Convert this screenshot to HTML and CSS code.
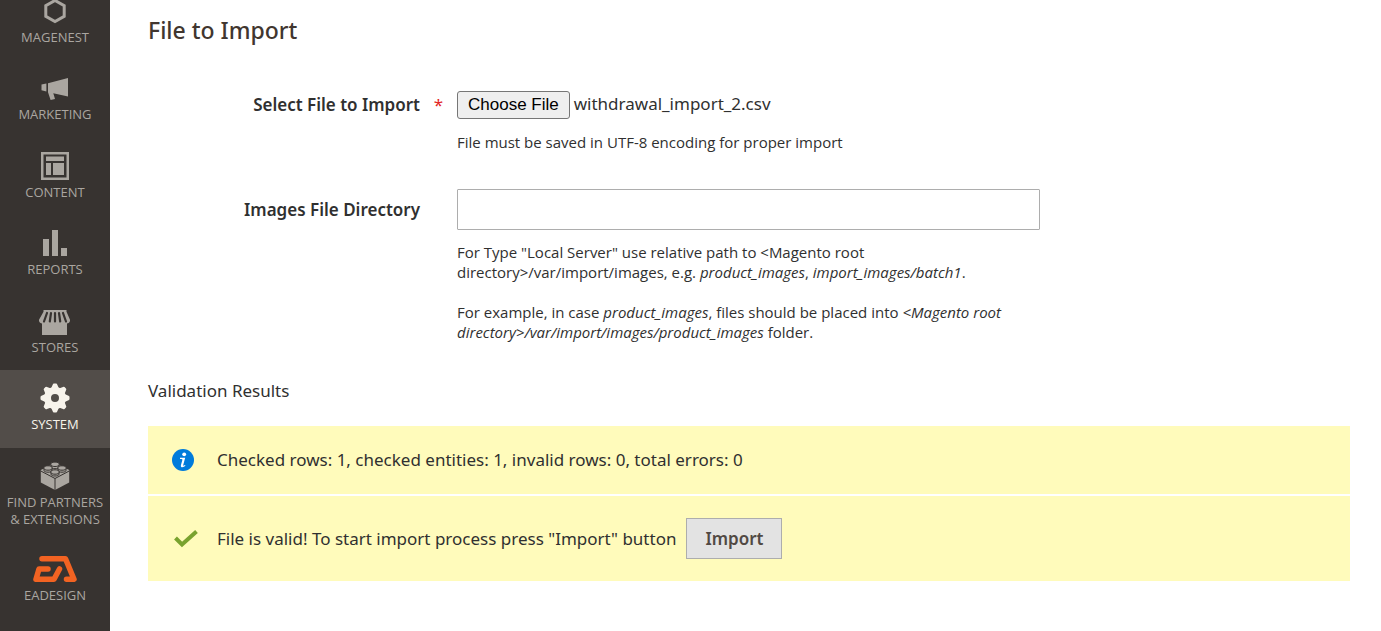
FILE: index.html
```html
<!DOCTYPE html>
<html lang="en">
<head>
    <meta charset="UTF-8">
    <meta name="viewport" content="width=device-width, initial-scale=1.0">
    <title>Import / System - Magento Admin</title>
    <link rel="stylesheet" href="styles.css">
</head>
<body>
    <nav class="menu" aria-label="Main menu">
        <ul class="menu-list">
            <li><a class="menu-item" href="#">
                <span class="menu-icon">
                    <svg width="24" height="28" viewBox="0 0 24 28"><path d="M12 3.5 21.2 8.6v10.8L12 24.5 2.8 19.4V8.6z" fill="none" stroke="currentColor" stroke-width="3"/></svg>
                </span>
                <span>MAGENEST</span>
            </a></li>
            <li><a class="menu-item" href="#">
                <span class="menu-icon">
                    <svg width="28" height="24" viewBox="0 0 28 24" fill="currentColor"><path d="M27 2v18.500L12.300 17.200 14 23 9.600 24 7 16.200V7.200z"/><path d="M.5 8.600 5.400 7.600v7.800L.5 14.200z"/></svg>
                </span>
                <span>MARKETING</span>
            </a></li>
            <li><a class="menu-item" href="#">
                <span class="menu-icon">
                    <svg width="28" height="28" viewBox="0 0 28 28" fill="currentColor"><path fill-rule="evenodd" d="M0 0h28v28H0zM2.500 2.500v23h23v-23z"/><path d="M5 4.500h18V9H5zM5 11h5v12H5zM12 11h11v12H12z"/></svg>
                </span>
                <span>CONTENT</span>
            </a></li>
            <li><a class="menu-item" href="#">
                <span class="menu-icon">
                    <svg width="26" height="28" viewBox="0 0 26 28" fill="currentColor"><path d="M1 10h6v17H1zM10 1h6v26h-6zM19 19h6v8h-6z"/></svg>
                </span>
                <span>REPORTS</span>
            </a></li>
            <li><a class="menu-item" href="#">
                <span class="menu-icon">
                    <svg width="32" height="28" viewBox="0 0 32 28">
                        <path d="M4.500 3h23v1.800l3.500 8c.3 2.600-1.600 3.800-3 3.800V28H3V16.600c-1.400 0-3.300-1.200-3-3.800l4.500-8z" fill="currentColor"/>
                        <path d="M8 6 5 14.500M12 6l-1.200 8.500M16 6v8.500M20 6l1.200 8.500M24 6l3 8.500" fill="none" stroke="#373330" stroke-width="2.200" stroke-linecap="round"/>
                    </svg>
                </span>
                <span>STORES</span>
            </a></li>
            <li><a class="menu-item active" href="#">
                <span class="menu-icon">
                    <svg width="30" height="30" viewBox="-15 -15 30 30">
                        <circle r="7.500" fill="none" stroke="currentColor" stroke-width="7"/>
                        <g fill="currentColor">
                            <path id="tooth" d="M-4-9.500-2.200-13.500Q-2-14.500-1-14.500h2Q2-14.500 2.200-13.500L4-9.500z"/>
                            <use href="#tooth" transform="rotate(45)"/>
                            <use href="#tooth" transform="rotate(90)"/>
                            <use href="#tooth" transform="rotate(135)"/>
                            <use href="#tooth" transform="rotate(180)"/>
                            <use href="#tooth" transform="rotate(225)"/>
                            <use href="#tooth" transform="rotate(270)"/>
                            <use href="#tooth" transform="rotate(315)"/>
                        </g>
                    </svg>
                </span>
                <span>SYSTEM</span>
            </a></li>
            <li><a class="menu-item" href="#">
                <span class="menu-icon">
                    <svg width="30" height="30" viewBox="0 0 30 30">
                        <path d="M.8 9 15 2l14.200 7v12.500L15 29 .8 21.500z" fill="currentColor"/>
                        <path d="M.8 10 15 17.500 29.200 10M15 17.500V29" fill="none" stroke="#373330" stroke-width="1"/>
                        <g fill="currentColor" stroke="#373330" stroke-width="1">
                            <path d="M11 3.500v2.400c0 2.400 8 2.400 8 0V3.500z"/><ellipse cx="15" cy="3.300" rx="4.200" ry="2.200"/>
                            <path d="M4 7v2.400c0 2.400 8 2.400 8 0V7z"/><ellipse cx="8" cy="7" rx="4.200" ry="2.200"/>
                            <path d="M18 7v2.400c0 2.400 8 2.400 8 0V7z"/><ellipse cx="22" cy="7" rx="4.200" ry="2.200"/>
                            <path d="M11 11v2.200c0 2.400 8 2.400 8 0V11z"/><ellipse cx="15" cy="11" rx="4.200" ry="2.200"/>
                        </g>
                    </svg>
                </span>
                <span>FIND PARTNERS &amp; EXTENSIONS</span>
            </a></li>
            <li><a class="menu-item" href="#">
                <span class="menu-icon">
                    <svg width="44" height="28" viewBox="0 0 44 28" fill="none" stroke="#f26322" stroke-width="5.500" stroke-linecap="round" stroke-linejoin="round">
                        <path d="M9 3.700h23.500L41 24.300h-7.500"/>
                        <path d="M15 14H6L3 24.300h18l5.500-10.300"/>
                    </svg>
                </span>
                <span>EADESIGN</span>
            </a></li>
        </ul>
    </nav>

    <main class="page">
        <h2>File to Import</h2>

        <form id="importForm">
            <div class="field">
                <label class="required" for="importFile">Select File to Import</label>
                <div class="control">
                    <input type="file" id="importFile" name="import_file">
                    <p class="note">File must be saved in UTF-8 encoding for proper import</p>
                </div>
            </div>

            <div class="field field-text">
                <label for="imagesDir">Images File Directory</label>
                <div class="control">
                    <input type="text" id="imagesDir" name="import_images_file_dir">
                    <p class="note">
                        For Type "Local Server" use relative path to &lt;Magento root directory&gt;/var/import/images, e.g. <em>product_images</em>, <em>import_images/batch1</em>.<br><br>
                        For example, in case <em>product_images</em>, files should be placed into <em>&lt;Magento root directory&gt;/var/import/images/product_images</em> folder.
                    </p>
                </div>
            </div>
        </form>

        <section class="results">
            <h3>Validation Results</h3>
            <div class="message">
                <span class="message-icon">
                    <svg width="24" height="24" viewBox="0 0 24 24"><circle cx="12" cy="12" r="11" fill="#007bdb"/><g fill="#fff"><circle cx="13.200" cy="6.300" r="1.900"/><path d="M9 9.800h5.200l-2 7.200c-.2.900.5.900 1.700-.1l.6.700c-1.700 2-5.300 2.600-4.600-.4l1.500-5.400c.1-.6-.2-.8-2.400-.9z"/></g></svg>
                </span>
                <span>Checked rows: 1, checked entities: 1, invalid rows: 0, total errors: 0</span>
            </div>
            <div class="message">
                <span class="message-icon">
                    <svg width="28" height="20" viewBox="0 0 28 20"><path d="M4.500 9 11 15.500 25.500 2.500" fill="none" stroke="#79a22e" stroke-width="4"/></svg>
                </span>
                <span>File is valid! To start import process press "Import" button</span>
                <button type="submit" form="importForm" class="btn">Import</button>
            </div>
        </section>
    </main>

    <script>
        // Keep the checked file selected in the form
        const transfer = new DataTransfer()
        transfer.items.add(new File([''], 'withdrawal_import_2.csv', { type: 'text/csv' }))
        document.getElementById('importFile').files = transfer.files
    </script>
</body>
</html>
```
FILE: styles.css
```css
* {
    margin: 0;
    padding: 0;
    box-sizing: border-box;
}

body {
    font-family: 'Noto Sans', 'Open Sans', Arial, sans-serif;
    font-size: 17px;
    line-height: 24px;
    color: #303030;
    background: #fff;
    min-height: 100vh;
    display: flex;
}

/* Sidebar */
.menu {
    flex: 0 0 110px;
    background: #373330;
    overflow: hidden;
}

.menu-list {
    list-style: none;
    display: grid;
    grid-template-rows: repeat(3, 77px 78px) auto auto;
    margin-top: -17px;
}

.menu-item {
    display: flex;
    flex-direction: column;
    align-items: center;
    height: 100%;
    padding: 10px 4px 13px;
    color: #aaa6a0;
    font-family: 'Open Sans', Arial, sans-serif;
    font-size: 13px;
    line-height: 17px;
    text-align: center;
    text-decoration: none;
}

.menu-item:focus-visible,
.menu-item.active {
    background: #524d49;
    color: #f7f3eb;
}

.menu-icon {
    height: 36px;
    display: flex;
    align-items: center;
    justify-content: center;
}

/* Content */
.page {
    flex: 1;
    min-width: 0;
    padding: 13px 31px 50px 38px;
}

h2 {
    font-size: 23px;
    line-height: 34px;
    font-weight: 500;
    color: #41362f;
    margin-bottom: 44px;
}

.field {
    display: grid;
    grid-template-columns: 309fr 583fr 310fr;
    margin-bottom: 37px;
}

.field label {
    font-weight: 600;
    line-height: 27px;
    text-align: right;
    padding-right: 37px;
    position: relative;
}

.field-text label {
    line-height: 42px;
}

.required::after {
    content: '*';
    position: absolute;
    right: 14px;
    color: #e22626;
    font-weight: 400;
}

input[type="file"] {
    display: block;
    width: 100%;
    height: 29px;
    font: inherit;
    line-height: 20px;
    color: #303030;
}

input[type="file"]::file-selector-button {
    height: 28px;
    padding: 0 10px;
    border: 1px solid #767676;
    border-radius: 3px;
    background: #efefef;
    color: #000;
    font: 17px 'Liberation Sans', Arial, sans-serif;
}

input[type="text"] {
    display: block;
    width: 100%;
    height: 41px;
    padding: 0 12px;
    border: 1px solid #adadad;
    border-radius: 1px;
    font: inherit;
    color: #303030;
}

.note {
    margin-top: 12px;
    font-family: 'Open Sans', Arial, sans-serif;
    font-size: 15px;
    line-height: 20px;
}

/* Validation messages */
.results h3 {
    font-size: 17px;
    font-weight: 400;
    margin-bottom: 23px;
}

.message {
    display: flex;
    align-items: center;
    min-height: 68px;
    padding: 22px 23px;
    background: #fffbbb;
}

.message + .message {
    margin-top: 2px;
}

.message-icon {
    flex: 0 0 46px;
    display: flex;
}

.btn {
    height: 41px;
    margin-left: 10px;
    padding: 0 18px;
    border: 1px solid #adadad;
    background: #e3e3e3;
    color: #514943;
    font: inherit;
    font-weight: 600;
    cursor: pointer;
}

.btn:hover {
    background: #dbdbdb;
}
```
